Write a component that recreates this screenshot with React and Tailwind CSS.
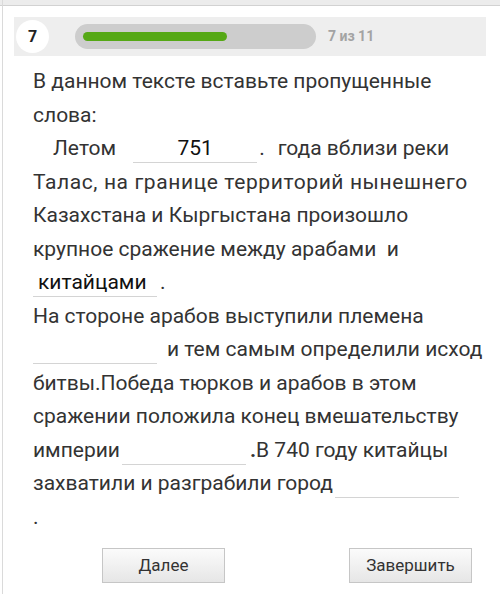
import React from 'react'

const FONT = { fontFamily: 'Roboto, "Noto Sans", sans-serif' }

// blank field: sits on the line's top so it never stretches the row
function Blank({ children, className = '' }) {
  return (
    <span className={'inline-block w-[124px] h-[31px] leading-[33.5px] align-top border-b border-[#d4d4d4] text-[#111] ' + className}>
      {children}
    </span>
  )
}

function Line({ children, className = '' }) {
  return <div className={'h-[33.5px] leading-[33.5px] whitespace-nowrap ' + className}>{children}</div>
}

function Header() {
  return (
    <div className="mx-[14px] mt-[11px] h-[39px] bg-[#eeeeee] flex items-center pl-[2px]">
      <div className="w-[33px] h-[33px] rounded-full bg-white flex items-center justify-center text-[16px] font-bold text-[#222]">7</div>
      <div className="ml-[26px] w-[241px] h-[25px] rounded-full bg-[#cdcdcd] flex items-center px-[8px]">
        <div className="w-[144px] h-[9px] rounded-full bg-[#55a815]" />
      </div>
      <span className="ml-[12px] text-[14px] font-bold text-[#a3a3a3]">7 из 11</span>
    </div>
  )
}

function Button({ children }) {
  return (
    <button className="w-[123px] h-[35px] border border-[#c6c6c6] bg-gradient-to-b from-[#fbfbfb] to-[#e6e6e6] text-[17px] text-[#333]">
      {children}
    </button>
  )
}

export default function App() {
  return (
    <div className="relative w-[500px] h-[594px] bg-white overflow-hidden" style={FONT}>
      <div className="h-[6px] bg-[#ececec] border-b border-[#d2d2d2]" />
      <div className="absolute left-[2px] top-0 bottom-0 w-[1px] bg-[#dadada]" />
      <Header />
      <div className="pl-[33px] pr-[8px] mt-[9px] text-[21px] text-[#333]">
        <Line>В данном тексте вставьте пропущенные</Line>
        <Line>слова:</Line>
        <Line>
          <span className="ml-[20px]">Летом</span>
          <Blank className="ml-[17px] text-center">751</Blank>
          <span className="ml-[2px]">.</span>
          <span className="ml-[13px]">года вблизи реки</span>
        </Line>
        <Line className="tracking-[0.6px]">Талас, на границе территорий нынешнего</Line>
        <Line>Казахстана и Кыргыстана произошло</Line>
        <Line>крупное сражение между арабами&nbsp; и</Line>
        <Line>
          <Blank className="pl-[5px]">китайцами</Blank>
          <span className="ml-[3px]">.</span>
        </Line>
        <Line>На стороне арабов выступили племена</Line>
        <Line>
          <Blank />
          <span className="ml-[10px]">и тем самым определили исход</span>
        </Line>
        <Line>битвы.Победа тюрков и арабов в этом</Line>
        <Line>сражении положила конец вмешательству</Line>
        <Line>
          империи<Blank className="ml-[2px]" />
          <span className="ml-[4px] font-bold">.</span>В 740 году китайцы
        </Line>
        <Line>захватили и разграбили город<Blank className="ml-[2px]" /></Line>
        <Line>.</Line>
      </div>
      <div className="flex mt-[14px] pl-[102px] gap-[124px]">
        <Button>Далее</Button>
        <Button>Завершить</Button>
      </div>
    </div>
  )
}
